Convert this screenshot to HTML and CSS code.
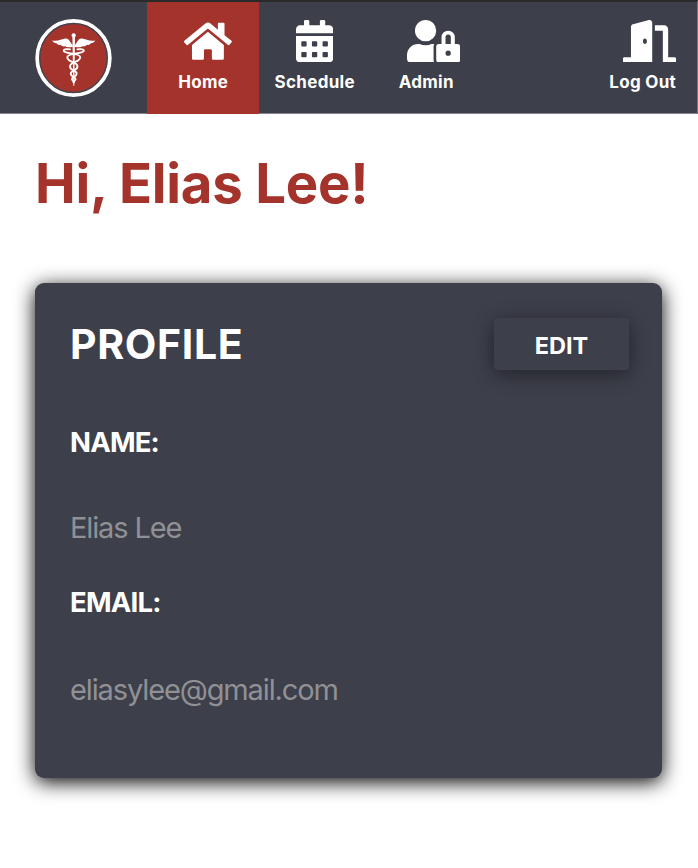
FILE: index.html
```html
<!DOCTYPE html>
<html lang="en">
<head>
<meta charset="utf-8">
<title>Profile</title>
<link rel="stylesheet" href="styles.css">
</head>
<body>
<header class="topbar">
  <a class="brand" href="#" aria-label="Home page">
    <svg class="logo" viewBox="0 0 78 80">
      <ellipse cx="39" cy="40" rx="36.7" ry="37.5" fill="#a4332c" stroke="#fff" stroke-width="4"/>
      <ellipse cx="39" cy="40" rx="34.2" ry="35" fill="none" stroke="#444450" stroke-width="1.4"/>
      <g fill="#fff">
        <circle cx="39.2" cy="17" r="2.1"/>
        <path d="M37.900 18h2.600l-.700 50h-1z"/>
        <path d="M38.2 26.5C36 26.300 35.500 20 31 20.300C27 20.600 23 23.500 17.300 22.300C18.500 24.500 20.500 25 21.800 25C22.500 26.400 24.500 27 25.800 26.700C27 28.300 29 28.600 30.500 28.200C33 30.300 36 28.500 38.200 28.800z"/>
        <path d="M40.200 26.500C42.400 26.300 42.900 20 47.400 20.300C51.400 20.600 55.400 23.500 61.100 22.300C59.900 24.500 57.900 25 56.600 25C55.900 26.400 53.900 27 52.600 26.700C51.400 28.300 49.400 28.600 47.900 28.200C45.400 30.300 42.400 28.500 40.200 28.800z"/>
      </g>
      <g fill="none" stroke="#fff" stroke-width="1.9" stroke-linecap="round">
        <path d="M35.500 31.300C31 30.400 28.500 31.500 29.200 33C30.500 36 45.800 34.500 45.800 39.200C45.800 44.500 35.500 43.500 35.500 48.500C35.500 53 42.200 52 42.200 56C42.200 59.500 37.300 58.500 37.300 61.500L39.500 64.500"/>
        <path d="M43 31.300C47.500 30.400 50 31.500 49.300 33C48 36 32.700 34.500 32.700 39.200C32.700 44.500 43 43.500 43 48.500C43 53 36.200 52 36.200 56C36.200 59.500 41.100 58.500 41.100 61.500L39 64.500"/>
      </g>
    </svg>
  </a>
  <nav class="nav">
    <a class="item active home" href="#">
      <svg class="icon" viewBox="0 0 576 512"><path d="M280.370 148.260L96 300.110V464a16 16 0 0 0 16 16l112.060-.290a16 16 0 0 0 15.920-16V368a16 16 0 0 1 16-16h64a16 16 0 0 1 16 16v95.640a16 16 0 0 0 16 16.050L464 480a16 16 0 0 0 16-16V300L295.670 148.260a12.190 12.190 0 0 0-15.300 0zM571.600 251.470L488 182.560V44.050a12 12 0 0 0-12-12h-56a12 12 0 0 0-12 12v72.610L318.470 43a48 48 0 0 0-61 0L4.340 251.470a12 12 0 0 0-1.600 16.900l25.500 31A12 12 0 0 0 45.150 301l235.220-193.740a12.190 12.190 0 0 1 15.300 0L530.900 301a12 12 0 0 0 16.900-1.600l25.500-31a12 12 0 0 0-1.700-16.930z"/></svg>
      <span>Home</span>
    </a>
    <a class="item schedule" href="#">
      <svg class="icon" viewBox="0 0 448 512"><path fill-rule="evenodd" d="M0 464c0 26.500 21.500 48 48 48h352c26.500 0 48-21.500 48-48V192H0v272zM320 268c0-6.600 5.400-12 12-12h40c6.600 0 12 5.400 12 12v40c0 6.600-5.400 12-12 12h-40c-6.600 0-12-5.400-12-12v-40zm0 128c0-6.600 5.400-12 12-12h40c6.600 0 12 5.400 12 12v40c0 6.600-5.400 12-12 12h-40c-6.600 0-12-5.400-12-12v-40zM192 268c0-6.600 5.400-12 12-12h40c6.600 0 12 5.400 12 12v40c0 6.600-5.400 12-12 12h-40c-6.600 0-12-5.400-12-12v-40zm0 128c0-6.600 5.400-12 12-12h40c6.600 0 12 5.400 12 12v40c0 6.600-5.400 12-12 12h-40c-6.600 0-12-5.400-12-12v-40zM64 268c0-6.600 5.400-12 12-12h40c6.600 0 12 5.400 12 12v40c0 6.600-5.400 12-12 12H76c-6.600 0-12-5.400-12-12v-40zm0 128c0-6.600 5.400-12 12-12h40c6.600 0 12 5.400 12 12v40c0 6.600-5.400 12-12 12H76c-6.600 0-12-5.400-12-12v-40zM400 64h-48V16c0-8.800-7.200-16-16-16h-32c-8.800 0-16 7.200-16 16v48H160V16c0-8.800-7.200-16-16-16h-32c-8.800 0-16 7.200-16 16v48H48C21.500 64 0 85.500 0 112v48h448v-48c0-26.500-21.500-48-48-48z"/></svg>
      <span>Schedule</span>
    </a>
    <a class="item admin" href="#">
      <svg class="icon" viewBox="0 0 640 512"><path d="M224 256A128 128 0 1 0 96 128a128 128 0 0 0 128 128zm96 64a63.080 63.080 0 0 1 8.100-30.500c-4.800-.500-9.500-1.500-14.500-1.500h-16.700a174.080 174.080 0 0 1-145.800 0h-16.700A134.430 134.430 0 0 0 0 422.400V464a48 48 0 0 0 48 48h280.900a63.540 63.540 0 0 1-8.900-32zm288-32h-32v-80a80 80 0 0 0-160 0v80h-32a32 32 0 0 0-32 32v160a32 32 0 0 0 32 32h224a32 32 0 0 0 32-32V320a32 32 0 0 0-32-32zM496 432a32 32 0 1 1 32-32 32 32 0 0 1-32 32zm32-144h-64v-80a32 32 0 0 1 64 0z"/></svg>
      <span>Admin</span>
    </a>
    <a class="item logout" href="#">
      <svg class="icon" viewBox="0 0 640 512"><path d="M624 448h-80V113.450C544 86.190 522.470 64 496 64H384v64h96v384h144c8.840 0 16-7.160 16-16v-32c0-8.840-7.160-16-16-16zM312.240 1.010l-192 49.740C105.990 54.440 96 67.700 96 82.920V448H16c-8.840 0-16 7.160-16 16v32c0 8.840 7.160 16 16 16h336V33.180c0-21.580-19.560-37.410-39.760-32.170zM264 288c-13.250 0-24-14.330-24-32s10.750-32 24-32 24 14.330 24 32-10.750 32-24 32z"/></svg>
      <span>Log Out</span>
    </a>
  </nav>
</header>
<main class="page">
  <h1 class="greeting">Hi, Elias Lee!</h1>
  <section class="card">
    <div class="card-head">
      <h2 class="card-title">PROFILE</h2>
      <button class="edit" type="button">EDIT</button>
    </div>
    <dl class="fields">
      <dt class="name-label">NAME:</dt>
      <dd class="name-value">Elias Lee</dd>
      <dt class="email-label">EMAIL:</dt>
      <dd class="email-value">eliasylee@gmail.com</dd>
    </dl>
  </section>
</main>
</body>
</html>
```
FILE: styles.css
```css
* { box-sizing: border-box; }

body {
  margin: 0;
  min-height: 100vh;
  background: #fff;
  font-family: Inter, "Liberation Sans", sans-serif;
}

.topbar {
  display: flex;
  height: 114px;
  background: #3d3f4a;
  border-top: 2px solid #2a2a2a;
  border-right: 1px solid #777783;
  box-shadow: inset 0 -1px #858590;
}

.brand {
  flex: 0 0 147px;
  padding: 15.500px 0 0 34.500px;
}

.logo { display: block; width: 77px; height: 80px; }

.nav { display: flex; flex: 1; margin-right: -1px; }

.item {
  display: flex;
  flex-direction: column;
  align-items: center;
  width: 111.500px;
  padding-top: 17.500px;
  color: #fff;
  font-size: 17px;
  font-weight: 650;
  letter-spacing: 0.3px;
  line-height: 20px;
  text-decoration: none;
  white-space: nowrap;
}

.item span { margin: 10px 0 0 1px; }
.active { background: #a4332c; }
.icon { display: block; height: 42.500px; fill: currentColor; }
.home .icon { margin-left: 10px; }
.admin .icon, .logout .icon { margin-left: 15px; }
.logout { margin-left: auto; }

.page {
  min-height: 754px;
  padding: 35px 36px 0 35px;
}

.greeting {
  margin: 0;
  color: #a4332c;
  font-size: 54.500px;
  font-weight: 700;
  letter-spacing: -0.25px;
  line-height: 68px;
}

.card {
  height: 495px;
  margin-top: 66px;
  padding: 35px 33px 0 35px;
  border-radius: 9px;
  background: #3d3f4a;
  box-shadow: 0 4px 20px #000;
  color: #fff;
}

.card-head { display: flex; justify-content: space-between; }

.card-title {
  margin: -1px 0 0;
  font-size: 41px;
  font-weight: 700;
  letter-spacing: 0.65px;
  line-height: 54px;
}

.edit {
  width: 135px;
  height: 52px;
  padding: 3px 0 0;
  border: 0;
  border-radius: 4px;
  background: #3d3f4a;
  box-shadow: 0 4px 20px rgba(0, 0, 0, 0.45);
  color: #fff;
  font: 650 23.500px/49px Inter, sans-serif;
}

.fields { margin: 53px 0 0; }
dt { font-size: 27.500px; font-weight: 700; letter-spacing: -0.8px; line-height: 36px; }
dd { margin: 0; color: #8f9195; font-size: 29px; font-weight: 370; letter-spacing: -1.12px; line-height: 36px; }
.name-value { margin-top: 50px; }
.email-label { margin-top: 38px; }
.email-value { margin-top: 52px; }
```
